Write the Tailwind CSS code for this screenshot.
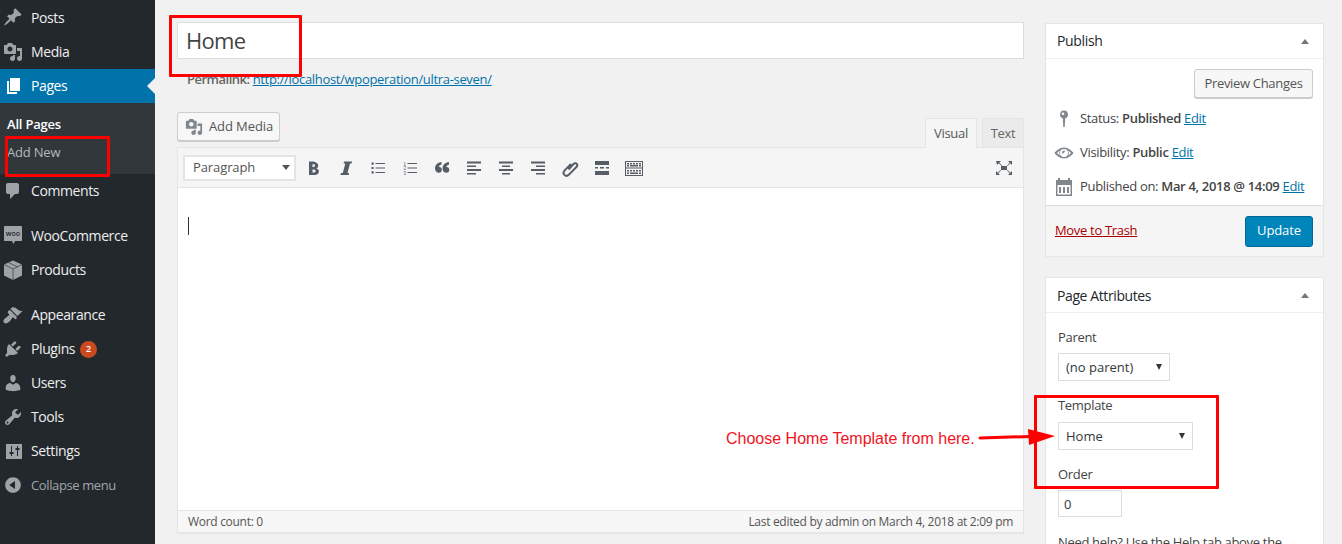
<!DOCTYPE html>
<html lang="en">
<head>
    <meta charset="UTF-8">
    <title>Edit Page</title>
    <script src="https://cdn.jsdelivr.net/npm/@tailwindcss/browser@4"></script>
</head>
<body class="relative h-[544px] w-[1342px] overflow-hidden bg-[#f1f1f1] font-['Open_Sans',sans-serif] text-[13px] tracking-[-0.32px] text-[#444]">
    <svg class="hidden">
        <symbol id="i-media" viewBox="0 0 20 20"><path d="M13 11V4c0-.55-.45-1-1-1h-1.670L9 1H5L3.670 3H2c-.55 0-1 .45-1 1v7c0 .55.45 1 1 1h10c.55 0 1-.45 1-1zM7 4.500c1.380 0 2.500 1.120 2.500 2.500S8.380 9.500 7 9.500 4.500 8.380 4.500 7 5.620 4.500 7 4.500zM14 6h5v10.500c0 1.380-1.120 2.500-2.500 2.500S14 17.880 14 16.500s1.120-2.500 2.500-2.500c.17 0 .34.02.5.05V9h-3V6zm-4 8.050V13h2v3.500c0 1.380-1.120 2.500-2.500 2.500S7 17.880 7 16.500 8.120 14 9.500 14c.17 0 .34.02.5.05z"/></symbol>
    </svg>

    <div class="flex h-full">
        <!-- admin menu -->
        <aside class="h-full w-[155px] shrink-0 bg-[#23282d] text-sm tracking-[-0.4px] text-[#eee]">
            <div class="relative flex h-[35px] items-center pl-[31px]">
                <svg class="absolute left-[3px] top-[7px] size-5 fill-[#9ea3a8]" viewBox="0 0 20 20"><path d="M10.440 3.020l1.820-1.820 6.360 6.350-1.830 1.820c-1.050-.68-2.480-.57-3.410.36l-.75.75c-.92.93-1.040 2.350-.35 3.410l-1.830 1.820-2.410-2.410-2.800 2.790c-.42.42-3.380 2.710-3.800 2.290s1.860-3.390 2.280-3.810l2.790-2.790L4.100 9.360l1.830-1.820c1.050.69 2.480.57 3.400-.36l.75-.75c.93-.92 1.050-2.350.36-3.410z"/></svg>
                Posts
            </div>
            <div class="relative flex h-[34px] items-center pl-[31px]">
                <svg class="absolute left-[3px] top-[7px] size-5 fill-[#9ea3a8]"><use href="#i-media"/></svg>
                Media
            </div>
            <div class="relative flex h-[34px] items-center bg-[#0073aa] pl-[31px] text-white">
                <svg class="absolute left-[4px] top-[7px] size-5 fill-white" viewBox="0 0 20 20"><path d="M6 15V2h10v13H6zm-1 1h8v2H3V5h2v11z"/></svg>
                Pages
                <span class="absolute right-0 top-[9px] border-y-8 border-r-8 border-y-transparent border-r-[#f1f1f1]"></span>
            </div>
            <div class="h-[71px] bg-[#32373c] pl-[7px] pt-[12px] text-[13px] tracking-[-0.2px]">
                <div class="h-[28px] font-semibold leading-[18px] text-white">All Pages</div>
                <div class="leading-[18px] text-[#b4b9be]">Add New</div>
            </div>
            <div class="relative mb-[11px] flex h-[34px] items-center pl-[31px]">
                <svg class="absolute left-[3px] top-[7px] size-5 fill-[#9ea3a8]" viewBox="0 0 20 20"><path d="M5 2h9c1.100 0 2 .9 2 2v7c0 1.100-.9 2-2 2h-2l-5 5v-5H5c-1.100 0-2-.9-2-2V4c0-1.100.9-2 2-2z"/></svg>
                Comments
            </div>
            <div class="relative flex h-[34px] items-center pl-[31px]">
                <svg class="absolute left-[3px] top-[6px] size-[20px]" viewBox="0 0 20 20"><path class="fill-[#9ea3a8]" d="M2 1h16c.6 0 1 .4 1 1v13c0 .6-.4 1-1 1h-6l-1.500 3-1.500-3H2c-.6 0-1-.4-1-1V2c0-.6.4-1 1-1z"/><text class="tracking-normal" x="10" y="11" text-anchor="middle" font-size="7" font-weight="600" fill="#23282d">woo</text></svg>
                WooCommerce
            </div>
            <div class="relative mb-[11px] flex h-[34px] items-center pl-[31px]">
                <svg class="absolute left-[3px] top-[7px] size-5" viewBox="0 0 20 20"><path class="fill-[#9ea3a8]" d="M10 .5l9 4v11l-9 4.500-9-4.500v-11z"/><path d="M1 4.500l9 4.500 9-4.500M5.500 2.500l9 4.500M10 9v11" fill="none" stroke="#23282d" stroke-width=".6"/></svg>
                Products
            </div>
            <div class="relative flex h-[34px] items-center pl-[31px]">
                <svg class="absolute left-[3px] top-[7px] size-5 fill-[#9ea3a8]" viewBox="0 0 20 20"><path d="M14.480 11.060L7.410 3.990l1.500-1.500c.5-.56 2.300-.47 3.510.32 1.210.8 1.430 1.280 2.910 2.100 1.180.64 2.450 1.260 4.450.85zm-.71.71L6.700 4.700 4.930 6.470c-.39.39-.39 1.020 0 1.410l1.060 1.060c.39.39.39 1.030 0 1.420-.6.6-1.430 1.110-2.210 1.690-.35.26-.7.53-1.010.84C1.430 13.230.4 14.990.4 15.990c0 1.300 1.130 2.430 2.430 2.430 1 0 2.760-1.030 4.100-2.370.31-.31.58-.66.84-1.010.58-.78 1.090-1.610 1.690-2.210.39-.39 1.030-.39 1.420 0l1.060 1.060c.39.39 1.020.39 1.410 0z"/></svg>
                Appearance
            </div>
            <div class="relative flex h-[34px] items-center pl-[31px]">
                <svg class="absolute left-[3px] top-[7px] size-5 fill-[#9ea3a8]" viewBox="0 0 20 20"><path d="M13.110 4.360L9.870 7.600 8 5.730l3.240-3.240c.35-.34 1.050-.2 1.560.32.52.51.66 1.210.31 1.550zm-8 1.770l.91-1.120 9.010 9.010-1.190.84c-.71.71-2.630 1.160-3.820 1.160H6.140L4.900 17.260c-.59.59-1.540.59-2.120 0-.59-.58-.59-1.530 0-2.120l1.240-1.240v-3.880c0-1.130.4-3.190 1.090-3.890zm7.260 3.970l3.240-3.240c.34-.35 1.040-.21 1.550.31.52.51.66 1.210.31 1.550l-3.240 3.250z"/></svg>
                Plugins
                <span class="ml-[5px] flex size-[17px] items-center justify-center rounded-full bg-[#ca4a1f] text-[9px] font-semibold tracking-normal text-white">2</span>
            </div>
            <div class="relative flex h-[34px] items-center pl-[31px]">
                <svg class="absolute left-[3px] top-[7px] size-5 fill-[#9ea3a8]" viewBox="0 0 20 20"><path d="M10 9.250c-2.270 0-2.730-3.440-2.730-3.440C7 4.020 7.820 2 9.970 2c2.160 0 2.980 2.020 2.710 3.810 0 0-.41 3.440-2.680 3.440zm0 2.570L12.720 10c2.390 0 4.520 2.330 4.520 4.530v2.490s-3.650 1.130-7.240 1.130c-3.650 0-7.240-1.130-7.240-1.130v-2.490c0-2.250 1.940-4.480 4.470-4.480z"/></svg>
                Users
            </div>
            <div class="relative flex h-[34px] items-center pl-[31px]">
                <svg class="absolute left-[3px] top-[7px] size-5 fill-[#9ea3a8]" viewBox="0 0 20 20"><path d="M16.680 9.770c-1.340 1.340-3.300 1.670-4.950.99l-5.410 6.520c-.99.99-2.590.99-3.580 0s-.99-2.590 0-3.570l6.520-5.420c-.68-1.650-.35-3.610.99-4.950 1.280-1.280 3.120-1.620 4.720-1.060l-2.890 2.890 2.820 2.820 2.860-2.870c.53 1.580.18 3.390-1.080 4.650zM3.810 16.210c.4.39 1.040.39 1.430 0 .4-.4.4-1.040 0-1.430-.39-.4-1.030-.4-1.430 0-.39.39-.39 1.030 0 1.430z"/></svg>
                Tools
            </div>
            <div class="relative flex h-[34px] items-center pl-[31px]">
                <svg class="absolute left-[4px] top-[7px] size-5 fill-[#9ea3a8]" viewBox="0 0 20 20"><path d="M18 18V3H2v15h16zM8 11h1.500v2H8v2H7v-2H5.500v-2H7V5h1zm5-2h-1.500V7H13V5h1v2h1.500v2H14v6h-1z" fill-rule="evenodd"/></svg>
                Settings
            </div>
            <div class="relative flex h-[34px] items-center pl-[31px] text-[13px] tracking-[-0.38px] text-[#a0a5aa]">
                <svg class="absolute left-[3px] top-[7px] size-5 fill-[#9ea3a8]" viewBox="0 0 20 20"><path d="M10 2.160c4.330 0 7.840 3.510 7.840 7.840s-3.510 7.840-7.840 7.840S2.160 14.330 2.160 10 5.710 2.160 10 2.160zm2 11.720V6.120L6.180 9.970z"/></svg>
                Collapse menu
            </div>
        </aside>

        <!-- post body -->
        <main class="ml-[22px] w-[847px] shrink-0 pt-[22px]">
            <div class="flex h-[37px] items-center border border-[#ddd] bg-white pl-2 text-[22px] tracking-[-0.7px] text-[#444]">Home</div>
            <div class="mt-[11px] pl-[10px] leading-[18px] text-[#666]"><span class="font-semibold tracking-[-0.5px]">Permalink:</span> <a class="text-[#0073aa] underline">http://localhost/wpoperation/ultra-seven/</a></div>

            <div class="mt-[24px] flex h-[36px] items-start justify-between">
                <button class="flex h-[29px] w-[103px] items-center gap-[6px] rounded-[3px] border border-[#ccc] bg-[#f7f7f7] pl-[7px] text-[13px] tracking-[-0.1px] text-[#555] shadow-[0_1px_0_#ccc]">
                    <svg class="size-[18px] fill-[#82878c]"><use href="#i-media"/></svg>
                    Add Media
                </button>
                <div class="mt-[6px] flex h-[30px] text-[13px] text-[#555]">
                    <div class="z-10 flex h-[30px] w-[52px] items-center justify-center border border-b-0 border-[#e5e5e5] bg-[#f5f5f5]">Visual</div>
                    <div class="ml-[5px] flex h-[30px] w-[42px] items-center justify-center border border-[#e5e5e5] bg-[#ebebeb] pt-px text-[#666]">Text</div>
                </div>
            </div>

            <div class="-mt-px h-[386px] border border-[#e5e5e5] bg-white shadow-[0_1px_1px_rgba(0,0,0,0.04)]">
                <div class="flex h-[40px] items-center border-b border-[#e5e5e5] bg-[#f5f5f5] pl-[5px]">
                    <div class="flex h-[26px] w-[113px] items-center justify-between border-2 border-[#e2e4e7] bg-white pl-2 pr-[4px] text-[13px] leading-none tracking-[-0.1px] text-[#555]">
                        Paragraph
                        <span class="border-x-[4px] border-t-[5px] border-x-transparent border-t-[#555]"></span>
                    </div>
                    <div class="ml-[8px] flex items-center gap-[12px]">
                        <svg class="size-5 fill-[#555d66]" viewBox="0 0 20 20"><path d="M5 3.500v13.500h5.750q1.800 0 2.950-.9t1.150-2.500q0-1.200-.63-2t-1.900-1.100v-.1q.9-.3 1.400-1t.5-1.700q0-1.700-1.100-2.500T9.500 3.500zm3.500 5.500V6.300h1.200q1.300 0 1.300 1.300 0 1.400-1.400 1.400zm0 2.500h1.400q1.700 0 1.700 1.500 0 1.500-1.600 1.500H8.500z" fill-rule="evenodd"/></svg>
                        <svg class="size-5 fill-[#555d66]" viewBox="0 0 20 20"><path d="M8 3.500h8l-.4 2H14l-2.500 9.500h1.600l-.4 2H4.500l.4-2h1.900l2.500-9.500H7.600z"/></svg>
                        <svg class="size-5 fill-[#555d66]" viewBox="0 0 20 20"><path d="M3.500 4.500h2.200v2.200H3.500zM7.500 5.100H17v1H7.500zM3.500 8.900h2.200v2.200H3.500zM7.500 9.500H17v1H7.500zM3.500 13.300h2.200v2.200H3.500zM7.500 13.900H17v1H7.500z"/></svg>
                        <svg class="size-5 fill-[#555d66]" viewBox="0 0 20 20"><path d="M7.500 5.100H17v1H7.500zM7.500 9.500H17v1H7.500zM7.500 13.900H17v1H7.500z"/><text class="tracking-normal" x="3.500" y="7.500" font-size="4.500" font-family="Liberation Sans">1</text><text class="tracking-normal" x="3.500" y="12" font-size="4.500" font-family="Liberation Sans">2</text><text class="tracking-normal" x="3.500" y="16.500" font-size="4.500" font-family="Liberation Sans">3</text></svg>
                        <svg class="size-5 fill-[#555d66]" viewBox="0 0 20 20"><path d="M9.500 4v2.500C8 6.900 7 7.800 6.900 9c1.700-.2 2.900.9 2.900 2.800 0 1.700-1.100 3-2.900 3C5 14.800 3 13.300 3 10.500 3 7 5.500 4.500 9.500 4zM17 4v2.500c-1.500.4-2.500 1.300-2.600 2.500 1.700-.2 2.900.9 2.900 2.800 0 1.700-1.100 3-2.900 3-1.900 0-3.900-1.500-3.900-4.300 0-3.500 2.500-6 6.500-6.500z"/></svg>
                        <svg class="size-5 fill-[#555d66]" viewBox="0 0 20 20"><path d="M3 3.500h14v2H3zM3 7.500h9v1.500H3zM3 11h14v2H3zM3 15h9v1.500H3z"/></svg>
                        <svg class="size-5 fill-[#555d66]" viewBox="0 0 20 20"><path d="M3 3.500h14v2H3zM6 7.500h8v1.500H6zM3 11h14v2H3zM6 15h8v1.500H6z"/></svg>
                        <svg class="size-5 fill-[#555d66]" viewBox="0 0 20 20"><path d="M3 3.500h14v2H3zM8 7.500h9v1.500H8zM3 11h14v2H3zM8 15h9v1.500H8z"/></svg>
                        <svg class="size-5 fill-none stroke-[#555d66] stroke-[2]" viewBox="0 0 20 20"><path d="M8.500 11.500l5-5.500c1-1 2.500-1 3.200-.2s.7 2.200-.3 3.200l-7.400 7.600c-1.500 1.400-3.400 1.500-4.600.3s-1.100-3 .3-4.500l6.300-6.500"/></svg>
                        <svg class="size-5 fill-[#555d66]" viewBox="0 0 20 20"><path d="M3 3h14v4H3zM3 9h3v1.500H3zM8 9h4v1.500H8zM14 9h3v1.500h-3zM3 13h14v4H3z"/></svg>
                        <svg class="size-5 fill-[#555d66]" viewBox="0 0 20 20"><path fill-rule="evenodd" d="M1 3h18v15H1zM2 4v5.500h16V4zM2 10.500V17h16v-6.500zM3 5h2v1.500H3zm3 0h2v1.500H6zm3 0h2v1.500H9zm3 0h2v1.500h-2zm3 0h2v1.500h-2zM3 7h2v1.500H3zm3 0h8v1.500H6zm9 0h2v1.500h-2zM3 12h2v1.500H3zm3 0h2v1.500H6zm3 0h2v1.500H9zm3 0h2v1.500h-2zm3 0h2v1.500h-2zM3 14.500h2V16H3zm3 0h8V16H6zm9 0h2V16h-2z"/></svg>
                    </div>
                    <svg class="ml-auto mr-[9px] size-5 fill-[#555d66]" viewBox="0 0 20 20"><path d="M7 8h6v4H7zM2 3h5L5.300 4.700 8 7.400 7.400 8 4.700 5.300 3 7zM18 3v4l-1.700-1.700L13.600 8 13 7.400l2.700-2.700L14 3zM2 17v-4l1.700 1.700L6.400 12l.6.6-2.700 2.700L6 17zM18 17h-4l1.700-1.700L13 12.600l.6-.6 2.700 2.700L18 13z"/></svg>
                </div>
                <div class="h-[322px] pl-[10px] pt-[29px]">
                    <div class="h-[18px] w-px bg-[#333]"></div>
                </div>
                <div class="flex h-[22px] items-center justify-between border-t border-[#e5e5e5] bg-[#f7f7f7] px-[10px] text-xs tracking-[-0.3px] text-[#555]">
                    <span>Word count: 0</span>
                    <span>Last edited by admin on March 4, 2018 at 2:09 pm</span>
                </div>
            </div>
        </main>

        <!-- side column -->
        <div class="ml-[21px] w-[279px] shrink-0 pt-[23px]">
            <section class="h-[233px] border border-[#e5e5e5] bg-white shadow-[0_1px_1px_rgba(0,0,0,0.04)]">
                <div class="flex h-[35px] items-center justify-between border-b border-[#eee] pl-[11px] pr-[14px]">
                    <h2 class="text-sm font-medium tracking-[-0.35px] text-[#23282d]">Publish</h2>
                    <span class="border-x-[4px] border-b-[5px] border-x-transparent border-b-[#72777c]"></span>
                </div>
                <div class="flex justify-end pr-[10px] pt-[10px]">
                    <button class="h-[29px] w-[119px] rounded-[3px] border border-[#ccc] bg-[#f7f7f7] text-[13px] tracking-[-0.32px] text-[#555] shadow-[0_1px_0_#ccc]">Preview Changes</button>
                </div>
                <div class="relative mt-[4px] flex h-[34px] items-center pl-[34px]">
                    <svg class="absolute left-[8px] top-[7px] size-5 fill-[#82878c]" viewBox="0 0 20 20"><path d="M10 1.500a4 4 0 0 1 1.200 7.800L10.700 18h-1.400L8.800 9.300A4 4 0 0 1 10 1.500zM9 3.500a1.300 1.300 0 1 0 0 2.600 1.300 1.300 0 0 0 0-2.600z" fill-rule="evenodd"/></svg>
                    <span>Status: <b class="font-semibold">Published</b> <a class="text-[#0073aa] underline">Edit</a></span>
                </div>
                <div class="relative flex h-[34px] items-center pl-[34px]">
                    <svg class="absolute left-[8px] top-[7px] size-5 fill-[#82878c]" viewBox="0 0 20 20"><path fill-rule="evenodd" d="M10 4.500c4.500 0 7.800 3.200 9.500 5.500-1.700 2.300-5 5.500-9.500 5.500S2.200 12.300.5 10C2.200 7.700 5.500 4.500 10 4.500zM10 6a4 4 0 1 0 0 8 4 4 0 0 0 0-8zM3 10c.8.900 1.700 1.800 2.800 2.600a5.500 5.500 0 0 1 0-5.200C4.700 8.200 3.800 9.100 3 10zm11.200-2.600a5.500 5.500 0 0 1 0 5.200c1.100-.8 2-1.700 2.800-2.600-.8-.9-1.700-1.800-2.800-2.600zM10 7.500c.5 0 1 .2 1.400.5l-2.900 2.900c-.3-.4-.5-.9-.5-1.400 0-1.100.9-2 2-2z"/></svg>
                    <span>Visibility: <b class="font-semibold">Public</b> <a class="text-[#0073aa] underline">Edit</a></span>
                </div>
                <div class="relative flex h-[34px] items-center pl-[34px]">
                    <svg class="absolute left-[8px] top-[7px] size-5 fill-[#82878c]" viewBox="0 0 20 20"><path fill-rule="evenodd" d="M2 3h2V1h2v2h8V1h2v2h2v16H2zM3.500 8v9.500h13V8zM5 10h2v6H5zm4 0h2v6H9zm4 0h2v6h-2z"/></svg>
                    <span>Published on: <b class="font-semibold">Mar 4, 2018 @ 14:09</b> <a class="text-[#0073aa] underline">Edit</a></span>
                </div>
                <div class="mt-[1px] flex h-[51px] items-center justify-between border-t border-[#ddd] bg-[#f5f5f5] pl-[9px] pr-[10px]">
                    <a class="text-[#a00] underline">Move to Trash</a>
                    <button class="h-[31px] w-[68px] rounded-[3px] border border-[#006799] bg-[#0085ba] text-[13px] tracking-[-0.1px] text-white">Update</button>
                </div>
            </section>

            <section class="mt-[21px] h-[280px] border border-[#e5e5e5] bg-white">
                <div class="flex h-[35px] items-center justify-between border-b border-[#eee] pl-[11px] pr-[14px]">
                    <h2 class="mt-[2px] text-sm font-medium tracking-[-0.4px] text-[#23282d]">Page Attributes</h2>
                    <span class="border-x-[4px] border-b-[5px] border-x-transparent border-b-[#72777c]"></span>
                </div>
                <div class="pl-[12px]">
                    <p class="mt-[15px] h-[18px] font-medium leading-[18px]">Parent</p>
                    <div class="mt-[7px] flex h-[28px] w-[112px] items-center justify-between border border-[#ddd] pl-[7px] pr-[7px] pt-[2px] tracking-normal text-[#32373c]">(no parent)<span class="-mt-[2px] border-x-[3px] border-t-[6px] border-x-transparent border-t-[#32373c]"></span></div>
                    <p class="mt-[15px] h-[18px] font-medium leading-[18px]">Template</p>
                    <div class="mt-[8px] flex h-[28px] w-[135px] items-center justify-between border border-[#ddd] pl-[7px] pr-[7px] pt-px tracking-normal text-[#32373c]">Home<span class="-mt-px border-x-[3px] border-t-[6px] border-x-transparent border-t-[#32373c]"></span></div>
                    <p class="mt-[15px] h-[18px] font-medium leading-[18px]">Order</p>
                    <div class="mt-[7px] flex h-[27px] w-[64px] items-center border border-[#ddd] pl-[5px] pt-[2px] tracking-normal text-[#32373c]">0</div>
                    <p class="mt-[16px] whitespace-nowrap leading-[19px]">Need help? Use the Help tab above the</p>
                </div>
            </section>
        </div>
    </div>

    <!-- red annotations on top of the screenshot -->
    <div class="absolute left-[169px] top-[15px] h-[62px] w-[133px] rounded-[1px] border-[3px] border-[#f00]"></div>
    <div class="absolute left-[5px] top-[136px] h-[41px] w-[105px] rounded-[1px] border-[3px] border-[#f00]"></div>
    <div class="absolute left-[1034px] top-[395px] h-[94px] w-[185px] rounded-[1px] border-[3px] border-[#f00]"></div>
    <span class="absolute left-[726px] top-[430px] font-['Liberation_Sans',sans-serif] text-base leading-[18px] tracking-normal text-[#f0141e]">Choose Home Template from here.</span>
    <svg class="absolute left-[978px] top-[425px] h-[24px] w-[80px]" viewBox="0 0 80 24"><path d="M2 13L52 11.500" stroke="#f00" stroke-width="3" stroke-linecap="round"/><path d="M50 4L77 11 51 20z" fill="#f00"/></svg>
</body>
</html>
